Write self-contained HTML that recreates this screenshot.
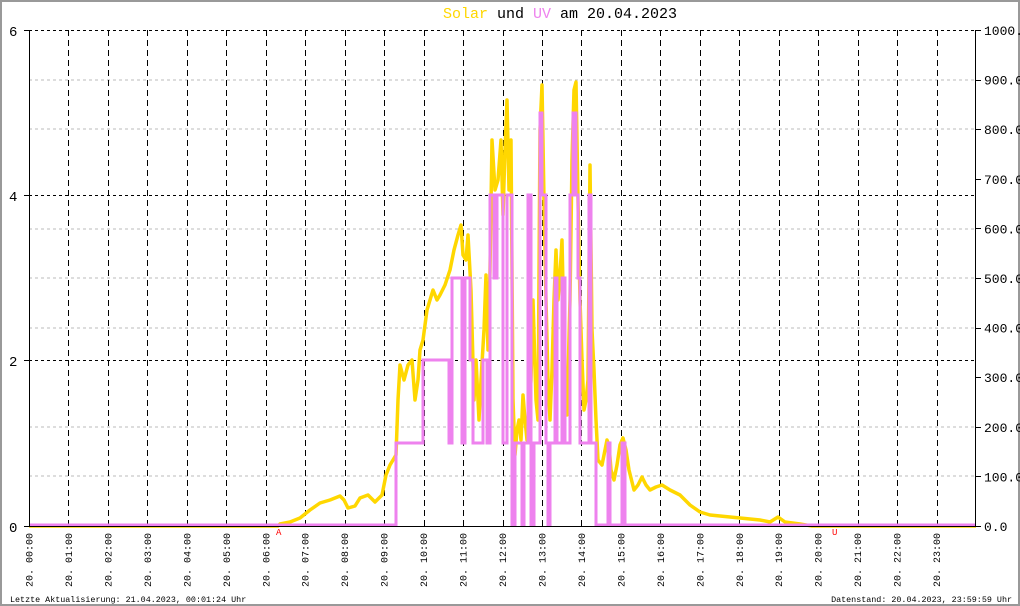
<!DOCTYPE html>
<html><head><meta charset="utf-8"><style>
html,body{margin:0;padding:0;background:#fff}
svg{display:block}
text{font-family:"Liberation Mono","DejaVu Sans Mono",monospace}
</style></head><body>
<svg width="1020" height="606" viewBox="0 0 1020 606" xmlns="http://www.w3.org/2000/svg">
<rect x="1" y="1" width="1018" height="604" fill="#fff" stroke="#999" stroke-width="2"/>
<g stroke="#bbb" stroke-width="1" stroke-dasharray="3,3">
<line x1="29" y1="80" x2="976" y2="80"/><line x1="29" y1="129" x2="976" y2="129"/>
<line x1="29" y1="229" x2="976" y2="229"/><line x1="29" y1="278" x2="976" y2="278"/>
<line x1="29" y1="328" x2="976" y2="328"/><line x1="29" y1="427" x2="976" y2="427"/>
<line x1="29" y1="476" x2="976" y2="476"/>
</g>
<g stroke="#000" stroke-width="1" stroke-dasharray="3,3">
<line x1="29" y1="30.5" x2="976" y2="30.5"/><line x1="29" y1="195.5" x2="976" y2="195.5"/><line x1="29" y1="360.5" x2="976" y2="360.5"/>
</g>
<g stroke="#000" stroke-width="1" stroke-dasharray="6,4" id="vl"></g>
<script>
(function(){var g=document.getElementById('vl'),ns='http://www.w3.org/2000/svg';
for(var k=1;k<24;k++){var x=Math.round(29+k*39.46)+0.5;var l=document.createElementNS(ns,'line');l.setAttribute('x1',x);l.setAttribute('x2',x);l.setAttribute('y1',30);l.setAttribute('y2',526);g.appendChild(l);}})();
</script>
<polyline fill="none" stroke="#ffd700" stroke-width="3.5" stroke-linejoin="round" points="29,526 278,526 280,524 290,522 300,518 310,510 320,503 330,500 340,496 344,500 348,508 355,506 360,498 368,495 375,502 382,495 386,475 390,465 396,455 398,400 400,365 404,380 408,365 412,360 415,400 418,380 420,350 423,340 427,310 430,300 433,290 437,300 440,295 445,285 450,270 454,250 458,235 461,225 463,255 466,260 468,235 471,290 474,400 476,360 479,420 481,380 484,330 486,275 488,350 490,270 492,140 495,190 498,180 501,140 503,215 505,150 507,100 509,190 511,140 513,400 515,455 517,430 519,420 521,440 523,395 525,420 527,440 529,410 531,380 533,300 536,400 538,420 540,130 542,85 544,200 546,300 548,380 550,420 552,370 554,300 556,250 558,300 560,275 562,240 565,380 567,415 570,300 572,160 574,90 576,82 578,200 580,300 582,360 584,410 586,400 588,380 590,165 592,330 594,370 596,420 598,460 602,465 605,450 607,440 609,445 611,470 614,480 617,465 620,445 623,438 626,450 629,470 634,490 638,485 642,477 646,485 650,490 656,487 662,485 670,490 680,495 690,505 700,512 710,515 720,516 740,518 760,520 770,522 778,517 785,522 800,524 812,526 976,526"/>
<polyline fill="none" stroke="#ee82ee" stroke-width="3" points="29,525 396,525 396,443 423,443 423,360 449,360 449,443 452,443 452,278 462,278 462,443 465,443 465,278 470,278 470,360 473,360 473,443 483,443 483,360 487,360 487,443 490,443 490,195 494,195 494,278 497,278 497,195 503,195 503,443 507,443 507,195 512,195 512,525 515,525 515,443 522,443 522,525 524,525 524,443 528,443 528,195 531,195 531,525 534,525 534,443 540,443 540,113 542,113 542,195 546,195 546,443 548,443 548,525 550,525 550,443 555,443 555,278 557,278 557,443 562,443 562,278 565,278 565,443 570,443 570,195 573,195 573,113 576,113 576,195 578,195 578,278 580,278 580,443 589,443 589,195 591,195 591,443 596,443 596,525 608,525 608,443 610,443 610,525 622,525 622,443 625,443 625,525 976,525"/>
<line x1="29.5" y1="30" x2="29.5" y2="527" stroke="#000"/>
<line x1="975.5" y1="30" x2="975.5" y2="527" stroke="#000"/>
<line x1="29" y1="526.5" x2="976" y2="526.5" stroke="#000"/>
<g stroke="#000"><line x1="24" y1="30.5" x2="29" y2="30.5"/><line x1="24" y1="195.5" x2="29" y2="195.5"/><line x1="24" y1="360.5" x2="29" y2="360.5"/><line x1="24" y1="526.5" x2="29" y2="526.5"/></g>
<g font-size="14" fill="#000"><text x="9" y="36">6</text><text x="9" y="201">4</text><text x="9" y="366">2</text><text x="9" y="532">0</text></g>
<g font-size="13" fill="#000" id="rl"></g>
<text x="560" y="18" font-size="15" text-anchor="middle"><tspan fill="#ffd700">Solar</tspan> und <tspan fill="#ee82ee">UV</tspan> am 20.04.2023</text>
<g id="xl" font-size="10" fill="#000"></g>
<text x="276" y="535" font-size="9" fill="#f00">A</text>
<text x="832" y="535" font-size="9" fill="#f00">U</text>
<text x="10" y="602" font-size="8.4">Letzte Aktualisierung: 21.04.2023, 00:01:24 Uhr</text>
<text x="1012" y="602" font-size="8.4" text-anchor="end">Datenstand: 20.04.2023, 23:59:59 Uhr</text>
<script>
(function(){var ns='http://www.w3.org/2000/svg';var r=document.getElementById('rl');
for(var i=0;i<=10;i++){var y=526-i*49.6;var t=document.createElementNS(ns,'text');t.setAttribute('x',984);t.setAttribute('y',y+5);t.textContent=(i*100)+'.0';r.appendChild(t);
var l=document.createElementNS(ns,'line');l.setAttribute('x1',976);l.setAttribute('x2',981);l.setAttribute('y1',Math.round(y)+0.5);l.setAttribute('y2',Math.round(y)+0.5);l.setAttribute('stroke','#000');r.appendChild(l);}
var g=document.getElementById('xl');
for(var k=0;k<24;k++){var x=29+k*39.46+3.5;var h=(k<10?'0':'')+k+':00';var t=document.createElementNS(ns,'text');t.setAttribute('transform','translate('+x+',587) rotate(-90)');t.textContent='20. '+h;g.appendChild(t);}})();
</script>
</svg>
</body></html>
